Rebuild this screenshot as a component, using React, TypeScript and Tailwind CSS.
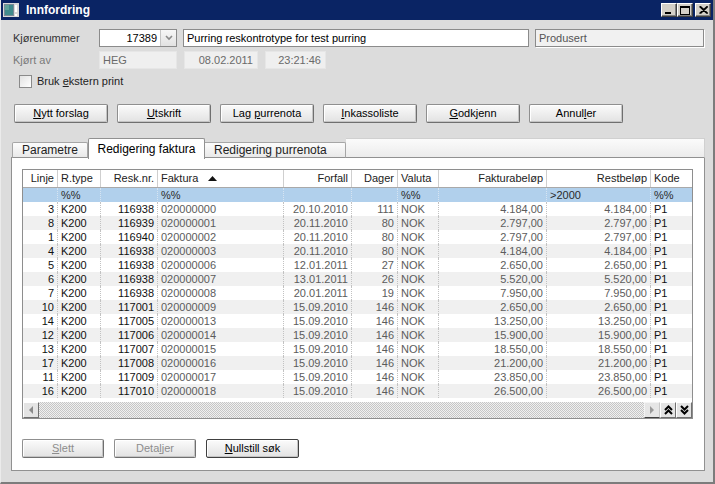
import React from 'react';

type Align = 'left' | 'right';

interface Col {
  key: string;
  label: string;
  width: string;
  align: Align;
  dark: boolean;
}

const COLS: Col[] = [
  { key: 'linje', label: 'Linje', width: 'w-[35px]', align: 'right', dark: true },
  { key: 'rtype', label: 'R.type', width: 'w-[43px]', align: 'left', dark: true },
  { key: 'resk', label: 'Resk.nr.', width: 'w-[57px]', align: 'right', dark: true },
  { key: 'faktura', label: 'Faktura', width: 'w-[126px]', align: 'left', dark: false },
  { key: 'forfall', label: 'Forfall', width: 'w-[68px]', align: 'right', dark: false },
  { key: 'dager', label: 'Dager', width: 'w-[46px]', align: 'right', dark: false },
  { key: 'valuta', label: 'Valuta', width: 'w-[41px]', align: 'left', dark: false },
  { key: 'fbelop', label: 'Fakturabeløp', width: 'w-[108px]', align: 'right', dark: false },
  { key: 'rbelop', label: 'Restbeløp', width: 'w-[104px]', align: 'right', dark: false },
  { key: 'kode', label: 'Kode', width: 'w-[41px]', align: 'left', dark: true },
];

const FILTER: Record<string, string> = {
  rtype: '%%',
  faktura: '%%',
  valuta: '%%',
  rbelop: '>2000',
  kode: '%%',
};

const ROWS: (string | number)[][] = [
  [3, 'K200', 116938, '020000000', '20.10.2010', 111, 'NOK', '4.184,00', '4.184,00', 'P1'],
  [8, 'K200', 116939, '020000001', '20.11.2010', 80, 'NOK', '2.797,00', '2.797,00', 'P1'],
  [1, 'K200', 116940, '020000002', '20.11.2010', 80, 'NOK', '2.797,00', '2.797,00', 'P1'],
  [4, 'K200', 116938, '020000003', '20.11.2010', 80, 'NOK', '4.184,00', '4.184,00', 'P1'],
  [5, 'K200', 116938, '020000006', '12.01.2011', 27, 'NOK', '2.650,00', '2.650,00', 'P1'],
  [6, 'K200', 116938, '020000007', '13.01.2011', 26, 'NOK', '5.520,00', '5.520,00', 'P1'],
  [7, 'K200', 116938, '020000008', '20.01.2011', 19, 'NOK', '7.950,00', '7.950,00', 'P1'],
  [10, 'K200', 117001, '020000009', '15.09.2010', 146, 'NOK', '2.650,00', '2.650,00', 'P1'],
  [14, 'K200', 117005, '020000013', '15.09.2010', 146, 'NOK', '13.250,00', '13.250,00', 'P1'],
  [12, 'K200', 117006, '020000014', '15.09.2010', 146, 'NOK', '15.900,00', '15.900,00', 'P1'],
  [13, 'K200', 117007, '020000015', '15.09.2010', 146, 'NOK', '18.550,00', '18.550,00', 'P1'],
  [17, 'K200', 117008, '020000016', '15.09.2010', 146, 'NOK', '21.200,00', '21.200,00', 'P1'],
  [11, 'K200', 117009, '020000017', '15.09.2010', 146, 'NOK', '23.850,00', '23.850,00', 'P1'],
  [16, 'K200', 117010, '020000018', '15.09.2010', 146, 'NOK', '26.500,00', '26.500,00', 'P1'],
];

function Btn({
  children,
  disabled,
  strong,
  className,
}: {
  children: React.ReactNode;
  disabled?: boolean;
  strong?: boolean;
  className?: string;
}) {
  return (
    <div
      className={[
        'h-[19px] flex items-center justify-center rounded-[2px] border bg-linear-to-b from-[#fbfbfb] to-[#e2e2e2] shadow-[inset_-1px_-1px_0_#c4c4c4,inset_1px_1px_0_#ffffff]',
        strong ? 'border-[#404040]' : 'border-[#8f8f8f] border-r-[#6f6f6f] border-b-[#6f6f6f]',
        disabled ? 'text-[#8d8d8d]' : 'text-black',
        className ?? 'w-[94px]',
      ].join(' ')}
    >
      <span>{children}</span>
    </div>
  );
}

function TitleButton({ children }: { children: React.ReactNode }) {
  return (
    <div className="w-[16px] h-[14px] bg-[#d4d0c8] border border-t-white border-l-white border-r-[#404040] border-b-[#404040] shadow-[inset_-1px_-1px_0_#808080] flex items-center justify-center">
      {children}
    </div>
  );
}

function ScrollBtn({ children, pressed }: { children: React.ReactNode; pressed?: boolean }) {
  return (
    <div
      className={[
        'w-[16px] h-[16px] flex items-center justify-center border',
        pressed
          ? 'bg-[#e6e6e6] border-t-[#f4f4f4] border-l-[#f4f4f4] border-r-[#c8c8c8] border-b-[#404040]'
          : 'bg-[#e4e4e4] border-t-white border-l-white border-r-[#707070] border-b-[#707070]',
      ].join(' ')}
    >
      {children}
    </div>
  );
}

export default function App() {
  return (
    <div className="w-[715px] h-[484px] overflow-hidden bg-[#dcdcdc] border-l border-[#ebebeb] border-r-2 border-r-[#7c7c7c] border-b-2 border-b-[#7c7c7c] font-['Liberation_Sans',Arial,sans-serif] text-[11px] text-[#1a1a1a] flex flex-col">
      {/* title bar */}
      <div className="h-[20px] bg-[#0a2464] flex items-center pl-[2px] pr-[2px] shrink-0">
        <svg width="16" height="14" viewBox="0 0 16 14">
          <rect x="0" y="0" width="16" height="14" fill="#d8d8d8" />
          <rect x="1" y="1" width="10" height="12" fill="#7a8a96" />
          <rect x="2" y="2" width="8" height="10" fill="#3f8a8c" />
          <rect x="2" y="2" width="4" height="5" fill="#5fa39a" />
          <rect x="12" y="2" width="2" height="7" fill="#ffffff" />
          <rect x="12" y="11" width="2" height="2" fill="#ffffff" />
        </svg>
        <span className="ml-[7px] text-white font-bold text-[12px]">Innfordring</span>
        <div className="ml-auto flex items-center">
          <TitleButton>
            <svg width="8" height="8" viewBox="0 0 8 8">
              <rect x="0" y="6" width="6" height="2" fill="#000" />
            </svg>
          </TitleButton>
          <TitleButton>
            <svg width="10" height="9" viewBox="0 0 10 9">
              <rect x="0.5" y="0.5" width="9" height="8" fill="none" stroke="#000" />
              <rect x="0" y="0" width="10" height="2" fill="#000" />
            </svg>
          </TitleButton>
          <div className="w-[2px]" />
          <TitleButton>
            <svg width="9" height="8" viewBox="0 0 9 8">
              <path d="M0.5 0.5 L8 7.5 M8 0.5 L0.5 7.5 M1.5 0.5 L9 7.5 M9 0.5 L1.5 7.5" stroke="#000" strokeWidth="1.2" />
            </svg>
          </TitleButton>
        </div>
      </div>

      <div className="flex flex-col pl-[10px] pr-[8px]">
        {/* Kjørenummer */}
        <div className="flex items-center mt-[9px] pl-[2px] h-[18px]">
          <span className="w-[86px] text-[#333]">Kjørenummer</span>
          <div className="flex h-[18px] w-[78px] border border-[#8b8b8b] bg-white">
            <div className="flex-1 flex items-center justify-end pr-[3px] text-black">17389</div>
            <div className="w-[16px] bg-linear-to-b from-[#f7f7f7] to-[#e2e2e2] border-l border-[#c5c5c5] flex items-center justify-center">
              <svg width="8" height="6" viewBox="0 0 8 6">
                <path d="M1 1 L4 4 L7 1" fill="none" stroke="#8a8a8a" strokeWidth="1.6" />
              </svg>
            </div>
          </div>
          <div className="ml-[6px] h-[18px] w-[346px] border border-[#8b8b8b] bg-white flex items-center pl-[3px] text-black">
            Purring reskontrotype for test purring
          </div>
          <div className="ml-[6px] h-[18px] w-[169px] border border-[#8b8b8b] bg-[#f1f1f1] shadow-[1px_1px_0_#ffffff] flex items-center pl-[3px] text-[#555]">
            Produsert
          </div>
        </div>

        {/* Kjørt av */}
        <div className="flex items-center mt-[4px] pl-[2px] h-[18px]">
          <span className="w-[86px] text-[#7a7a7a]">Kjørt av</span>
          <div className="h-[18px] w-[78px] bg-[#efefef] border border-[#e6e6e6] flex items-center pl-[3px] text-[#6a6a6a]">
            HEG
          </div>
          <div className="ml-[7px] h-[18px] w-[74px] bg-[#efefef] border border-[#e6e6e6] flex items-center justify-end pr-[4px] text-[#6a6a6a]">
            08.02.2011
          </div>
          <div className="ml-[7px] h-[18px] w-[61px] bg-[#efefef] border border-[#e6e6e6] flex items-center justify-end pr-[4px] text-[#6a6a6a]">
            23:21:46
          </div>
        </div>

        {/* checkbox */}
        <div className="flex items-center mt-[6px] pl-[8px] h-[13px]">
          <div className="w-[13px] h-[13px] border border-[#8a8a8a] bg-linear-to-br from-[#e2e2e2] to-white" />
          <span className="ml-[5px] text-[#222]">
            Bruk <span className="underline">e</span>kstern print
          </span>
        </div>

        {/* action buttons */}
        <div className="flex items-center gap-[9px] mt-[16px] pl-[3px]">
          <Btn>
            <span className="underline">N</span>ytt forslag
          </Btn>
          <Btn>
            <span className="underline">U</span>tskrift
          </Btn>
          <Btn>
            Lag <span className="underline">p</span>urrenota
          </Btn>
          <Btn>
            <span className="underline">I</span>nkassoliste
          </Btn>
          <Btn>
            <span className="underline">G</span>odkjenn
          </Btn>
          <Btn>
            Annul<span className="underline">l</span>er
          </Btn>
        </div>

        {/* tabs */}
        <div className="flex items-end h-[20px] mt-[15px] text-[12px]">
          <div className="w-[1px] h-[16px] border-b border-[#919191]" />
          <div className="w-[76px] h-[16px] flex items-center justify-center border border-[#a6a6a6] border-b-[#919191] rounded-t-[2px] bg-linear-to-b from-[#fcfcfc] to-[#e9e9e9] text-[#222]">
            Parametre
          </div>
          <div className="w-[117px] h-[21px] -mb-[1px] flex items-center justify-center border border-b-0 border-[#919191] rounded-t-[2px] bg-white text-black relative z-10">
            Redigering faktura
          </div>
          <div className="w-[141px] h-[16px] flex items-center pl-[9px] border border-l-0 border-[#a6a6a6] border-b-[#919191] rounded-tr-[2px] bg-linear-to-b from-[#fcfcfc] to-[#e9e9e9] text-[#222]">
            Redigering purrenota
          </div>
          <div className="flex-1 h-[20px] border-t border-r border-[#d0d0d0] border-b border-b-[#919191] bg-linear-to-b from-[#fbfbfb] to-[#ececec]" />
        </div>

        {/* tab panel */}
        <div className="bg-white border border-t-0 border-[#919191] pt-[11px] pl-[10px] pb-[12px] flex flex-col">
          <div className="w-[671px] border border-[#8e8e8e] flex flex-col bg-white">
            {/* header */}
            <div className="flex h-[18px] border-b border-[#a9a9a9] text-[#222]">
              {COLS.map((c, i) => (
                <div
                  key={c.key}
                  className={[
                    c.width,
                    'h-full flex items-center shrink-0',
                    i < COLS.length - 1 ? 'border-r border-[#cfcfcf]' : '',
                    c.align === 'right' ? 'justify-end pr-[3px]' : 'pl-[3px]',
                  ].join(' ')}
                >
                  {c.label}
                  {c.key === 'faktura' && (
                    <svg width="9" height="5" viewBox="0 0 9 5" className="ml-[10px]">
                      <path d="M0 5 L4.5 0 L9 5 Z" fill="#111" />
                    </svg>
                  )}
                </div>
              ))}
            </div>

            {/* filter row */}
            <div className="flex h-[14px] bg-[#b1d0ec] text-[#2a2a2a]">
              {COLS.map((c, i) => (
                <div
                  key={c.key}
                  className={[
                    c.width,
                    'h-full flex items-center shrink-0 pl-[3px]',
                    i < COLS.length - 1 ? 'border-r border-dotted border-[#d6e4f2]' : '',
                  ].join(' ')}
                >
                  {FILTER[c.key] ?? ''}
                </div>
              ))}
            </div>

            {/* data rows */}
            <div className="flex flex-col h-[200px]">
              {ROWS.map((row, r) => (
                <div key={r} className={['flex h-[14px]', r % 2 === 1 ? 'bg-[#f0f0f0]' : 'bg-white'].join(' ')}>
                  {COLS.map((c, i) => (
                    <div
                      key={c.key}
                      className={[
                        c.width,
                        'h-full flex items-center shrink-0 leading-none',
                        i < COLS.length - 1 ? 'border-r border-dotted border-[#c2c2c2]' : '',
                        c.align === 'right' ? 'justify-end pr-[3px]' : 'pl-[3px]',
                        c.dark ? 'text-[#111]' : 'text-[#5c5c5c]',
                      ].join(' ')}
                    >
                      {row[i]}
                    </div>
                  ))}
                </div>
              ))}
            </div>

            {/* horizontal scrollbar */}
            <div className="flex h-[16px]">
              <ScrollBtn>
                <svg width="5" height="8" viewBox="0 0 5 8">
                  <path d="M4 0 L0 4 L4 8 Z" fill="#8a8a8a" />
                </svg>
              </ScrollBtn>
              <div className="flex-1 bg-[repeating-conic-gradient(#c6c6c6_0%_25%,#f0f0f0_0%_50%)] bg-size-[2px_2px]" />
              <ScrollBtn pressed>
                <svg width="5" height="8" viewBox="0 0 5 8">
                  <path d="M0 0 L4 4 L0 8 Z" fill="#9a9a9a" />
                </svg>
              </ScrollBtn>
              <ScrollBtn>
                <svg width="9" height="10" viewBox="0 0 9 10">
                  <path d="M1 5 L4.5 1.5 L8 5 M1 9 L4.5 5.5 L8 9" fill="none" stroke="#000" strokeWidth="2" />
                </svg>
              </ScrollBtn>
              <ScrollBtn>
                <svg width="9" height="10" viewBox="0 0 9 10">
                  <path d="M1 1 L4.5 4.5 L8 1 M1 5 L4.5 8.5 L8 5" fill="none" stroke="#000" strokeWidth="2" />
                </svg>
              </ScrollBtn>
            </div>
          </div>

          {/* bottom buttons */}
          <div className="flex items-center gap-[10px] mt-[20px]">
            <Btn disabled className="w-[82px]">
              <span className="underline">S</span>lett
            </Btn>
            <Btn disabled className="w-[82px]">
              Deta<span className="underline">l</span>jer
            </Btn>
            <Btn strong className="w-[93px]">
              <span className="underline">N</span>ullstill søk
            </Btn>
          </div>
        </div>
      </div>
    </div>
  );
}
